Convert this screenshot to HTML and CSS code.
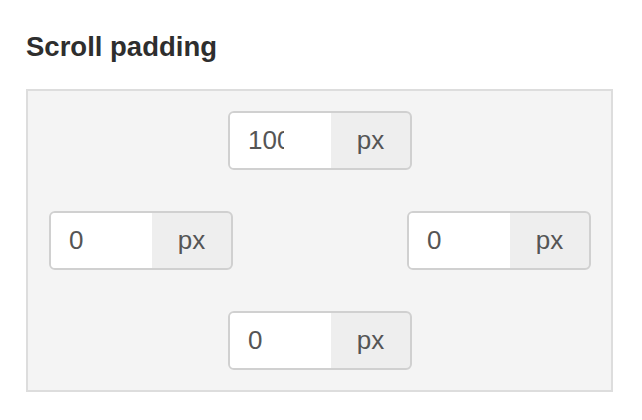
FILE: index.html
```html
<!DOCTYPE html>
<html lang="en">
<head>
    <meta charset="UTF-8">
    <title>Scroll padding</title>
    <link rel="stylesheet" href="styles.css">
</head>
<body>
    <h2 class="section-title">Scroll padding</h2>

    <div class="padding-box">
        <div class="padding-row center">
            <div class="input-group">
                <input class="num-input" type="text" value="100">
                <span class="unit">px</span>
            </div>
        </div>

        <div class="padding-row spread">
            <div class="input-group">
                <input class="num-input" type="text" value="0">
                <span class="unit">px</span>
            </div>
            <div class="input-group">
                <input class="num-input" type="text" value="0">
                <span class="unit">px</span>
            </div>
        </div>

        <div class="padding-row center">
            <div class="input-group">
                <input class="num-input" type="text" value="0">
                <span class="unit">px</span>
            </div>
        </div>
    </div>
</body>
</html>
```

FILE: styles.css
```css
body {
    font-family: "Liberation Sans", Helvetica, Arial, sans-serif;
    background: #fff;
    margin: 0;
    padding: 31px 29px 0 26px;
}
.section-title {
    font-size: 27.5px;
    line-height: 32px;
    font-weight: bold;
    color: #2e2e2e;
    margin: 0 0 26px;
}
.padding-box {
    background: #f4f4f4;
    border: 2px solid #ddd;
    padding: 20px 20px 20px 21px;
    display: flex;
    flex-direction: column;
    gap: 41px;
}
.padding-row {
    display: flex;
}
.padding-row.center {
    justify-content: center;
}
.padding-row.spread {
    justify-content: space-between;
}
.input-group {
    display: flex;
    width: 184px;
    height: 59px;
    box-sizing: border-box;
    border: 2px solid #d0d0d0;
    border-radius: 6px;
    overflow: hidden;
    background: #eee;
}
.num-input {
    width: 101px;
    box-sizing: border-box;
    border: none;
    outline: none;
    margin: 0;
    padding: 0 47px 0 18px;
    background: #fff;
    font-family: inherit;
    font-size: 26px;
    color: #555;
}
.unit {
    flex: 1;
    display: flex;
    align-items: center;
    justify-content: center;
    font-size: 26px;
    color: #555;
}
```
